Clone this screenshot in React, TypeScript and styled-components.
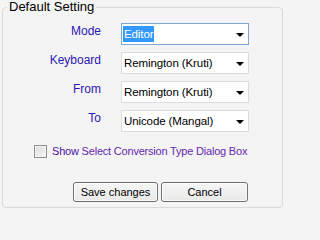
import React, { useState } from "react";
import styled, { createGlobalStyle } from "styled-components";

const GlobalStyle = createGlobalStyle`
  html, body {
    margin: 0;
    padding: 0;
    background: #f4f4f4;
    font-family: "Liberation Sans", Arial, sans-serif;
  }
`;

const fields = [
  { label: "Mode", value: "Editor", focused: true },
  { label: "Keyboard", value: "Remington (Kruti)", focused: false },
  { label: "From", value: "Remington (Kruti)", focused: false },
  { label: "To", value: "Unicode (Mangal)", focused: false },
];

export default function App(): JSX.Element {
  const [showDialog, setShowDialog] = useState(false);

  return (
    <Page>
      <GlobalStyle />
      <Panel>
        <Legend>Default Setting</Legend>
        <FieldGrid>
          {fields.map((field) => (
            <React.Fragment key={field.label}>
              <FieldLabel>{field.label}</FieldLabel>
              <SelectBox focused={field.focused}>
                {field.focused ? (
                  <Highlighted>{field.value}</Highlighted>
                ) : (
                  <SelectText>{field.value}</SelectText>
                )}
                <Arrow />
              </SelectBox>
            </React.Fragment>
          ))}
        </FieldGrid>

        <CheckRow>
          <CheckBox
            type="checkbox"
            checked={showDialog}
            onChange={(e) => setShowDialog(e.target.checked)}
          />
          <CheckText>
            Show <LinkText>Select Conversion Type Dialog Box</LinkText>
          </CheckText>
        </CheckRow>

        <ButtonRow>
          <Button width={85}>Save changes</Button>
          <Button width={87}>Cancel</Button>
        </ButtonRow>
      </Panel>
    </Page>
  );
}

const Page = styled.div`
  width: 285px;
  padding: 7px 2px 0 2px;
  box-sizing: border-box;
`;

const Panel = styled.section`
  position: relative;
  padding: 15px 0 5px 0;
  border: 1px solid #dadada;
  border-radius: 4px;
`;

const Legend = styled.span`
  position: absolute;
  top: -8px;
  left: 4px;
  padding: 0 2px;
  background: #f4f4f4;
  font-size: 13px;
  line-height: 14px;
  color: #000;
`;

const FieldGrid = styled.div`
  display: grid;
  grid-template-columns: 98px 128px;
  grid-auto-rows: 22px;
  column-gap: 20px;
  row-gap: 7px;
`;

const FieldLabel = styled.div`
  text-align: right;
  font-size: 12px;
  line-height: 15px;
  padding-top: 1px;
  color: #2c17b1;
`;

const SelectBox = styled.div<{ focused: boolean }>`
  display: flex;
  align-items: center;
  box-sizing: border-box;
  height: 22px;
  padding: 0 0 0 2px;
  background: #fff;
  border: 1px solid ${({ focused }) => (focused ? "#7fa6d4" : "#dcdcdc")};
  font-size: 11.5px;
  letter-spacing: -0.1px;
  color: #000;
`;

const SelectText = styled.span`
  line-height: 15px;
  white-space: nowrap;
`;

const Highlighted = styled.span`
  background: #3399ff;
  color: #fff;
  line-height: 16px;
  padding: 0 1px;
  margin-left: -1px;
`;

const Arrow = styled.span`
  margin: 1px 4px 0 auto;
  width: 0;
  height: 0;
  border-left: 4px solid transparent;
  border-right: 4px solid transparent;
  border-top: 4px solid #000;
`;

const CheckRow = styled.label`
  display: flex;
  align-items: center;
  margin: 12px 0 0 31px;
  font-size: 11px;
  letter-spacing: -0.2px;
  line-height: 14px;
`;

const CheckBox = styled.input`
  appearance: none;
  margin: 0 5px 0 0;
  width: 13px;
  height: 13px;
  box-sizing: border-box;
  border: 1px solid #8f8f8f;
  background: linear-gradient(135deg, #dcdcdc 0%, #f6f6f6 100%);
  box-shadow: inset 0 0 0 1px #f4f4f4;
`;

const CheckText = styled.span`
  color: #4d12a3;
  white-space: nowrap;
`;

const LinkText = styled.span`
  color: #6428ac;
`;

const ButtonRow = styled.div`
  display: flex;
  justify-content: flex-end;
  gap: 3px;
  margin: 24px 34px 0 0;
`;

const Button = styled.button<{ width: number }>`
  width: ${({ width }) => width}px;
  height: 20px;
  box-sizing: border-box;
  padding: 0;
  font-family: "Liberation Sans", Arial, sans-serif;
  font-size: 11px;
  color: #000;
  border: 1px solid #707070;
  border-radius: 3px;
  background: linear-gradient(#f6f6f6, #e9e9e9);
  box-shadow: inset 0 0 0 1px #fcfcfc;
`;
